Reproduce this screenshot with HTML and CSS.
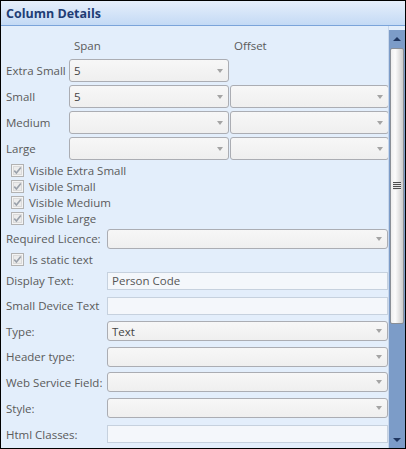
FILE: index.html
```html
<!DOCTYPE html>
<html>
<head>
<meta charset="utf-8">
<link rel="stylesheet" href="styles.css">
</head>
<body>
<div class="window">
  <div class="titlebar"><span class="title">Column Details</span></div>
  <div class="main">
    <div class="content">
      <div class="span-grid">
        <div></div><div class="colhead">Span</div><div class="colhead off">Offset</div>
        <div class="lbl">Extra Small</div><div class="select"><span>5</span><i class="arrow"></i></div><div></div>
        <div class="lbl">Small</div><div class="select"><span>5</span><i class="arrow"></i></div><div class="select"><i class="arrow"></i></div>
        <div class="lbl">Medium</div><div class="select"><i class="arrow"></i></div><div class="select"><i class="arrow"></i></div>
        <div class="lbl">Large</div><div class="select"><i class="arrow"></i></div><div class="select"><i class="arrow"></i></div>
      </div>
      <div class="checks">
        <div class="check"><svg class="cb" width="13" height="13" viewBox="0 0 13 13"><rect x="0.5" y="0.5" width="12" height="12" fill="#f4f4f4" stroke="#b2b2b2"/><rect x="2.5" y="2.5" width="8" height="8" fill="#ececec" stroke="#dadada"/><path d="M3.3 6.6 L5.4 9 L9.8 3.4" fill="none" stroke="#9aa1ab" stroke-width="1.6"/></svg><span>Visible Extra Small</span></div>
        <div class="check"><svg class="cb" width="13" height="13" viewBox="0 0 13 13"><rect x="0.5" y="0.5" width="12" height="12" fill="#f4f4f4" stroke="#b2b2b2"/><rect x="2.5" y="2.5" width="8" height="8" fill="#ececec" stroke="#dadada"/><path d="M3.3 6.6 L5.4 9 L9.8 3.4" fill="none" stroke="#9aa1ab" stroke-width="1.6"/></svg><span>Visible Small</span></div>
        <div class="check"><svg class="cb" width="13" height="13" viewBox="0 0 13 13"><rect x="0.5" y="0.5" width="12" height="12" fill="#f4f4f4" stroke="#b2b2b2"/><rect x="2.5" y="2.5" width="8" height="8" fill="#ececec" stroke="#dadada"/><path d="M3.3 6.6 L5.4 9 L9.8 3.4" fill="none" stroke="#9aa1ab" stroke-width="1.6"/></svg><span>Visible Medium</span></div>
        <div class="check"><svg class="cb" width="13" height="13" viewBox="0 0 13 13"><rect x="0.5" y="0.5" width="12" height="12" fill="#f4f4f4" stroke="#b2b2b2"/><rect x="2.5" y="2.5" width="8" height="8" fill="#ececec" stroke="#dadada"/><path d="M3.3 6.6 L5.4 9 L9.8 3.4" fill="none" stroke="#9aa1ab" stroke-width="1.6"/></svg><span>Visible Large</span></div>
      </div>
      <div class="form">
        <div class="lbl">Required Licence:</div><div class="select"><i class="arrow"></i></div>
        <div class="check wide"><svg class="cb" width="13" height="13" viewBox="0 0 13 13"><rect x="0.5" y="0.5" width="12" height="12" fill="#f4f4f4" stroke="#b2b2b2"/><rect x="2.5" y="2.5" width="8" height="8" fill="#ececec" stroke="#dadada"/><path d="M3.3 6.6 L5.4 9 L9.8 3.4" fill="none" stroke="#9aa1ab" stroke-width="1.6"/></svg><span>Is static text</span></div>
        <div class="lbl">Display Text:</div><div class="input">Person Code</div>
        <div class="lbl">Small Device Text</div><div class="input"></div>
        <div class="lbl">Type:</div><div class="select"><span>Text</span><i class="arrow"></i></div>
        <div class="lbl">Header type:</div><div class="select"><i class="arrow"></i></div>
        <div class="lbl">Web Service Field:</div><div class="select"><i class="arrow"></i></div>
        <div class="lbl">Style:</div><div class="select"><i class="arrow"></i></div>
        <div class="lbl">Html Classes:</div><div class="input"></div>
      </div>
    </div>
    <div class="scrollbar">
      <div class="sb-btn"><i class="up"></i></div>
      <div class="thumb"><div class="grip"></div></div>
      <div class="track"></div>
      <div class="sb-btn"><i class="down"></i></div>
    </div>
  </div>
</div>
</body>
</html>
```
FILE: styles.css
```css
* { box-sizing: border-box; }
body {
  margin: 0;
  font-family: "Open Sans", "Liberation Sans", sans-serif;
  font-size: 11.5px;
  color: #5a5a5a;
}
.window {
  width: 406px;
  height: 449px;
  border: 1px solid #000;
  background: #e3eefb;
  display: flex;
  flex-direction: column;
  overflow: hidden;
}
.titlebar {
  flex: none;
  height: 25px;
  border-bottom: 1px solid #7ba4da;
  background: linear-gradient(#e6effb, #c4daf5);
  padding-left: 5px;
  display: flex;
  align-items: center;
}
.title {
  font-weight: 700;
  font-size: 12.5px;
  color: #1f3d75;
}
.main {
  flex: 1;
  display: flex;
  min-height: 0;
}
.content {
  flex: 1;
  border-right: 1px solid #c8d7ec;
  padding: 9px 0 0 5px;
  overflow: hidden;
}
.span-grid {
  display: grid;
  grid-template-columns: 62px 160px 159px;
  grid-template-rows: 21px 23px 23px 23px 23px;
  column-gap: 1px;
  row-gap: 3px;
}
.colhead { align-self: center; padding-left: 5px; }
.colhead.off { padding-left: 4px; }
.lbl { align-self: center; white-space: nowrap; }
.select {
  display: flex;
  align-items: center;
  border: 1px solid #abadb3;
  border-radius: 3px;
  background: linear-gradient(#f7f7f7, #efefef);
  padding: 0 5px 0 4px;
  color: #444;
}
.arrow {
  margin-left: auto;
  width: 0;
  height: 0;
  border-left: 3.5px solid transparent;
  border-right: 3.5px solid transparent;
  border-top: 4px solid #a4a4a4;
}
.checks {
  margin-top: 2px;
  padding-left: 5px;
  display: grid;
  grid-auto-rows: 16px;
}
.check {
  display: flex;
  align-items: center;
  gap: 5px;
  white-space: nowrap;
}
.cb { flex: none; }
.form {
  display: grid;
  grid-template-columns: 101px 281px;
  grid-template-rows: 25px 17px 25px 25px 26px 25px 26px 26px 26px;
}
.form .select { height: 20px; align-self: center; }
.input {
  height: 18px;
  align-self: center;
  border: 1px solid #c6d1de;
  background: #f4f7fb;
  padding-left: 4px;
  display: flex;
  align-items: center;
  color: #555;
}
.check.wide { grid-column: 1 / span 2; padding-left: 5px; }
.scrollbar {
  flex: none;
  width: 16px;
  margin-top: 4px;
  background: #7c9cc8;
  display: flex;
  flex-direction: column;
  align-items: center;
}
.sb-btn {
  flex: none;
  height: 17px;
  width: 100%;
  display: flex;
  align-items: center;
  justify-content: center;
}
.up, .down {
  width: 0;
  height: 0;
  border-left: 4px solid transparent;
  border-right: 4px solid transparent;
}
.up { border-bottom: 4px solid #1f3660; }
.down { border-top: 4px solid #1f3660; }
.thumb {
  flex: none;
  width: 14px;
  height: 276px;
  margin-top: 1px;
  border: 1px solid #8a8f96;
  border-radius: 2px;
  background: linear-gradient(to right, #eeeeee, #fbfbfb 35%, #dedede 75%, #cdcdcd);
  display: flex;
  align-items: center;
  justify-content: center;
}
.grip {
  width: 8px;
  height: 8px;
  background: repeating-linear-gradient(#4e4e4e 0 1px, #e8e8e8 1px 2px);
}
.track { flex: 1; }
```
